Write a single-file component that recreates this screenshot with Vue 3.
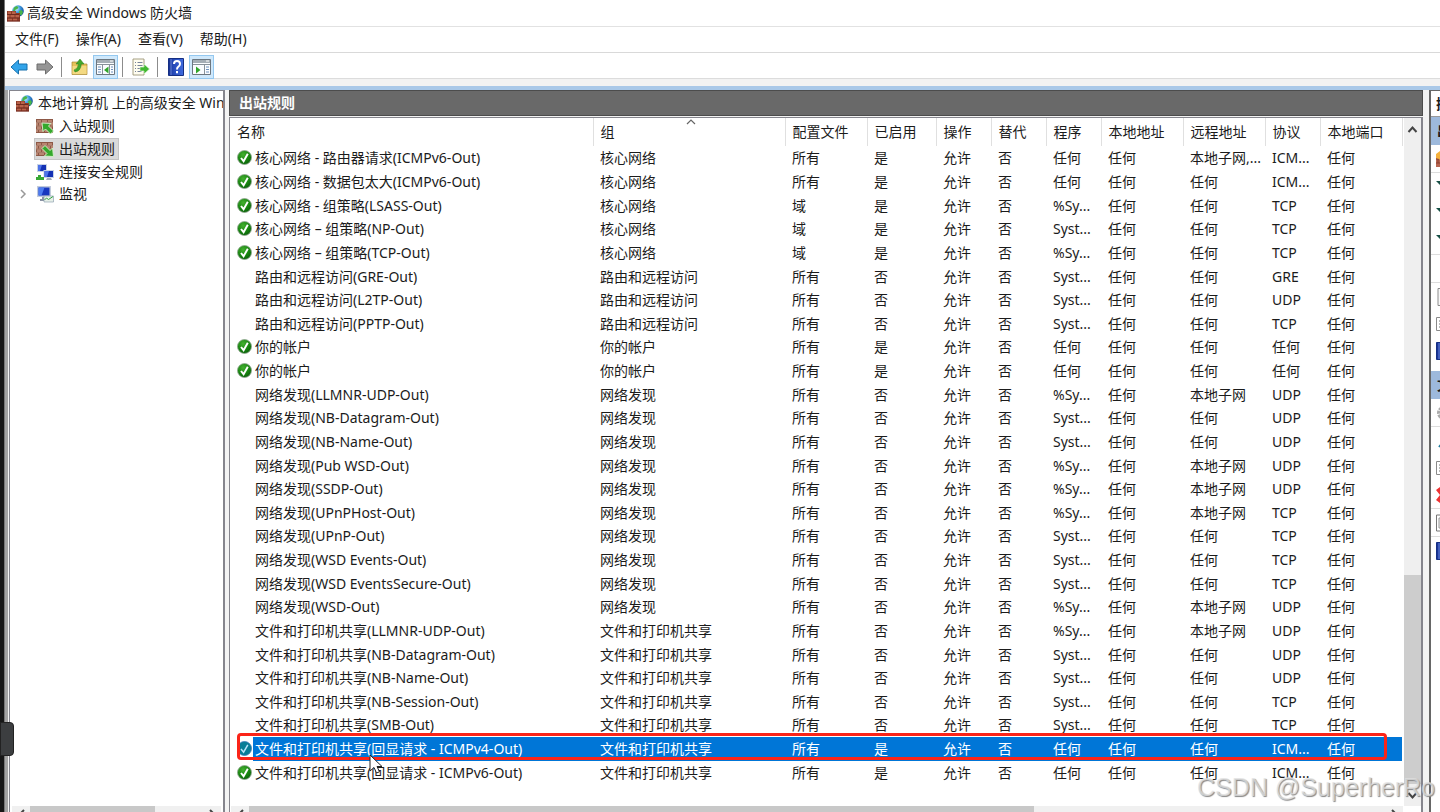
<script setup>
const menus = ['文件(F)', '操作(A)', '查看(V)', '帮助(H)']

const columns = [
  ['名称', 'c-name'], ['组', 'c-group'], ['配置文件', 'c-wide'], ['已启用', 'c-mid'],
  ['操作', 'c-small'], ['替代', 'c-small'], ['程序', 'c-small'], ['本地地址', 'c-wide'],
  ['远程地址', 'c-wide'], ['协议', 'c-small'], ['本地端口', 'c-wide'],
]

const CORE = '核心网络'
const RAS = '路由和远程访问'
const ACC = '你的帐户'
const NET = '网络发现'
const FPS = '文件和打印机共享'
const ANY = '任何'
const SUB = '本地子网'
const raw = [
  [1, CORE + ' - 路由器请求(ICMPv6-Out)', CORE, '所有', ANY, '本地子网,...', 'ICM...'],
  [1, CORE + ' - 数据包太大(ICMPv6-Out)', CORE, '所有', ANY, ANY, 'ICM...'],
  [1, CORE + ' - 组策略(LSASS-Out)', CORE, '域', '%Sy...', ANY, 'TCP'],
  [1, CORE + ' – 组策略(NP-Out)', CORE, '域', 'Syst...', ANY, 'TCP'],
  [1, CORE + ' – 组策略(TCP-Out)', CORE, '域', '%Sy...', ANY, 'TCP'],
  [0, RAS + '(GRE-Out)', RAS, '所有', 'Syst...', ANY, 'GRE'],
  [0, RAS + '(L2TP-Out)', RAS, '所有', 'Syst...', ANY, 'UDP'],
  [0, RAS + '(PPTP-Out)', RAS, '所有', 'Syst...', ANY, 'TCP'],
  [1, ACC, ACC, '所有', ANY, ANY, ANY],
  [1, ACC, ACC, '所有', ANY, ANY, ANY],
  [0, NET + '(LLMNR-UDP-Out)', NET, '所有', '%Sy...', SUB, 'UDP'],
  [0, NET + '(NB-Datagram-Out)', NET, '所有', 'Syst...', ANY, 'UDP'],
  [0, NET + '(NB-Name-Out)', NET, '所有', 'Syst...', ANY, 'UDP'],
  [0, NET + '(Pub WSD-Out)', NET, '所有', '%Sy...', SUB, 'UDP'],
  [0, NET + '(SSDP-Out)', NET, '所有', '%Sy...', SUB, 'UDP'],
  [0, NET + '(UPnPHost-Out)', NET, '所有', '%Sy...', SUB, 'TCP'],
  [0, NET + '(UPnP-Out)', NET, '所有', 'Syst...', ANY, 'TCP'],
  [0, NET + '(WSD Events-Out)', NET, '所有', 'Syst...', ANY, 'TCP'],
  [0, NET + '(WSD EventsSecure-Out)', NET, '所有', 'Syst...', ANY, 'TCP'],
  [0, NET + '(WSD-Out)', NET, '所有', '%Sy...', SUB, 'UDP'],
  [0, FPS + '(LLMNR-UDP-Out)', FPS, '所有', '%Sy...', SUB, 'UDP'],
  [0, FPS + '(NB-Datagram-Out)', FPS, '所有', 'Syst...', ANY, 'UDP'],
  [0, FPS + '(NB-Name-Out)', FPS, '所有', 'Syst...', ANY, 'UDP'],
  [0, FPS + '(NB-Session-Out)', FPS, '所有', 'Syst...', ANY, 'TCP'],
  [0, FPS + '(SMB-Out)', FPS, '所有', 'Syst...', ANY, 'TCP'],
  [1, FPS + '(回显请求 - ICMPv4-Out)', FPS, '所有', ANY, ANY, 'ICM...'],
  [1, FPS + '(回显请求 - ICMPv6-Out)', FPS, '所有', ANY, ANY, 'ICM...'],
]
const SELECTED = 25
const rules = raw.map(([on, name, group, profile, program, remote, protocol]) => ({
  on: !!on,
  name,
  cells: [group, profile, on ? '是' : '否', '允许', '否', program, ANY, remote, protocol, ANY],
}))

const topActions = ['new', '-', 'filter', 'filter', 'filter', '-', 'none', '-', 'page', 'list', 'help']
const ruleActions = ['gear', '-', 'cut', 'list', 'delete', '-', 'props', '-', 'help']
</script>

<template>
  <div class="window">
    <svg class="defs" aria-hidden="true">
      <defs>
        <radialGradient id="globe" cx="35%" cy="30%" r="75%">
          <stop offset="0" stop-color="#d9f2ff" /><stop offset=".45" stop-color="#3f9be0" /><stop offset="1" stop-color="#0c4190" />
        </radialGradient>
        <radialGradient id="ok" cx="40%" cy="30%" r="75%">
          <stop offset="0" stop-color="#43b02f" /><stop offset=".6" stop-color="#16830f" /><stop offset="1" stop-color="#0a5d0a" />
        </radialGradient>
        <linearGradient id="book" x1="0" y1="0" x2="1" y2="0">
          <stop offset="0" stop-color="#17318f" /><stop offset=".3" stop-color="#2447b5" /><stop offset="1" stop-color="#3f6be0" />
        </linearGradient>
        <symbol id="firewall" viewBox="0 0 17 17">
          <circle cx="11" cy="6" r="5.8" fill="url(#globe)" />
          <path d="M7 2.5 9.500 1l2 1-1 2-2 .7L7.500 7 6 6ZM12 6l2.500-1 1.500 2-1.500 3.500L12 9Z" fill="#48b549" />
          <path d="M0 6h9v2h4v8.500H0Z" fill="#8e3a28" />
          <path d="M1 6.500h3v2.500H1Zm4 0h3.500v2.500H5ZM0 10h2.500v2.500H0Zm3.500 0h4v2.500h-4Zm5 0h3.500v2.500H8.500ZM1 13.500h4v2H1Zm5 0h4v2H6Z" fill="#b9634a" />
          <path d="M0 9.500h12M0 13h13M0 16h13" stroke="#5b2018" stroke-width=".6" />
        </symbol>
        <symbol id="bricks" viewBox="0 0 18 15">
          <path d="M0 0h17v14H0Z" fill="#8d5846" />
          <path d="M1 1h4v2H1Zm5 0h5v2H6Zm6 0h4v2h-4ZM0 4h2v2.500H0Zm3 0h5v2.500H3Zm6 0h5v2.500H9Zm6 0h2v2.500h-2ZM1 7.500h4V10H1Zm5 0h5V10H6Zm6 0h4V10h-4ZM0 11h2v2H0Zm3 0h5v2H3Zm6 0h5v2H9Z" fill="#b98571" />
          <path d="M0 3.500h17M0 7h17M0 10.500h17" stroke="#d2b0a0" stroke-width=".4" />
        </symbol>
        <symbol id="inbound" viewBox="0 0 18 15">
          <use href="#bricks" width="18" height="15" />
          <path d="m6 4 9 .5-2.500 2.500 5 5-3 3-5-5L7 12.500Z" fill="#35a82c" stroke="#d8f3cd" stroke-width=".9" />
        </symbol>
        <symbol id="outbound" viewBox="0 0 18 15">
          <use href="#bricks" width="18" height="15" />
          <path d="m17.500 14.500-9-.5 2.500-2.500-5-5 3-3 5 5L16.500 6Z" fill="#35a82c" stroke="#d8f3cd" stroke-width=".9" />
        </symbol>
        <symbol id="computers" viewBox="0 0 18 17">
          <path d="M1 0h10v8H1Z" fill="#c9d3e4" /><path d="M2 1h8v6H2Z" fill="#1431b4" /><path d="M2 1h4L4 7H2Z" fill="#4d73e8" />
          <path d="M7.500 6H18v8H7.500Z" fill="#c9d3e4" /><path d="M8.500 7h8.500v6H8.500Z" fill="#1431b4" /><path d="M8.500 7H13l-2 6H8.500Z" fill="#4d73e8" />
          <path d="M11 14h4l1 2h-6Z" fill="#a3abb8" />
          <path d="M0 13h2v-2h3v2h3v3H0Z" fill="#37a834" />
        </symbol>
        <symbol id="monitor" viewBox="0 0 18 17">
          <path d="M1 0h14v11H1Z" fill="#c2cbdc" /><path d="M2.500 1.500h11v8h-11Z" fill="#1838bf" /><path d="M2.500 1.500h6l-3 8h-3Z" fill="#4d7cf0" />
          <path d="M6 11h4v2h2v2H4v-2h2Z" fill="#8b94a5" />
          <path d="M8 10h9.500v6H8Z" fill="#e6efe8" stroke="#91a4b1" stroke-width=".7" />
          <path d="m8.500 14 2-2 2 1.500 4.500-3" fill="none" stroke="#36a546" />
        </symbol>
        <symbol id="check" viewBox="0 0 15 15">
          <circle cx="7.500" cy="7.500" r="7" fill="url(#ok)" stroke="#93a793" stroke-width=".8" />
          <path d="m4 8 2.600 3.200L10.800 3.800" fill="none" stroke="#fff" stroke-width="1.900" />
        </symbol>
        <symbol id="check-sel" viewBox="0 0 15 15">
          <circle cx="7.500" cy="7.500" r="7" fill="#087e96" stroke="#3978b8" stroke-width=".8" />
          <path d="m4 8 2.600 3.200L10.800 3.800" fill="none" stroke="#b9e4fa" stroke-width="1.500" />
        </symbol>
        <symbol id="arrow" viewBox="0 0 18 16">
          <path d="M1 8 8.500 1v4H17v6H8.500v4Z" stroke-linejoin="round" />
        </symbol>
        <symbol id="folder-up" viewBox="0 0 17 17">
          <path d="M1 4h6l1.500 2H16v10.500H1Z" fill="#e6c25a" stroke="#a98630" stroke-width=".7" />
          <path d="M1.500 8H15.500v8H1.500Z" fill="#f3d982" />
          <path d="M3 12q4-1 4.500-6H5L9 1l4 5h-2.700Q10 13 4 14Z" fill="#43a82d" stroke="#2c7d1d" stroke-width=".5" />
        </symbol>
        <symbol id="tree-pane" viewBox="0 0 19 17">
          <path d="M.5 1.500h18v15H.5Z" fill="#fafcff" stroke="#6d7780" /><path d="M1 2h17v3H1Z" fill="#a4adb5" />
          <path d="M14 3h3" stroke="#fff" /><path d="M1 6.500h17M6.500 7v9M13.500 7v9" stroke="#87919a" /><path d="M2 9h3m-3 2.500h3m-3 2.500h3M15 9h2m-2 2.500h2m-2 2.500h2" stroke="#6f92bd" />
          <path d="m12.500 8.500-4.500 3.500 4.500 3.500Z" fill="#2fa52a" />
        </symbol>
        <symbol id="action-pane" viewBox="0 0 19 17">
          <path d="M.5 1.500h18v15H.5Z" fill="#fafcff" stroke="#6d7780" /><path d="M1 2h17v3H1Z" fill="#a4adb5" />
          <path d="M14 3h3" stroke="#fff" /><path d="M1 6.500h17M12.500 7v9" stroke="#87919a" /><path d="M14 9h3m-3 2.500h3m-3 2.500h3" stroke="#6f92bd" />
          <path d="m4 8.500 4.500 3.500-4.500 3.500Z" fill="#2fa52a" />
        </symbol>
        <symbol id="export" viewBox="0 0 18 18">
          <path d="M1 1h11v16H1Z" fill="#fffdf0" stroke="#9c9577" stroke-width=".9" />
          <path d="M3 4.500h1m1.500 0h5M3 7.500h1m1.500 0h5M3 10.500h1m1.500 0h3M3 13.500h1m1.500 0h4" stroke="#77829a" />
          <path d="M8 9h4V6l5.500 5-5.500 5v-3H8Z" fill="#42b831" stroke="#e6f8df" stroke-width=".6" />
        </symbol>
        <symbol id="help" viewBox="0 0 16 18">
          <path d="M.5.5h15v17H.5Z" fill="url(#book)" stroke="#152f83" /><path d="M3 1v16" stroke="#89a4ef" stroke-width=".7" />
          <path d="M6 6q0-3 3-3t3 3q0 1.500-1.500 2.500T9 11.500M9 13v2.200" fill="none" stroke="#fff" stroke-width="2" />
        </symbol>
      </defs>
    </svg>

    <aside class="edge"></aside>
    <div class="frame">
      <header class="title">
        <svg width="17" height="17"><use href="#firewall" /></svg>
        <h1>高级安全 Windows 防火墙</h1>
      </header>
      <nav class="menu">
        <button v-for="m in menus" :key="m" type="button">{{ m }}</button>
      </nav>
      <div class="toolbar">
        <button type="button" aria-label="后退"><svg width="18" height="16" class="back"><use href="#arrow" /></svg></button>
        <button type="button" aria-label="前进"><svg width="18" height="16" class="forward"><use href="#arrow" /></svg></button>
        <i></i>
        <button type="button" aria-label="上移"><svg width="17" height="17"><use href="#folder-up" /></svg></button>
        <button type="button" class="on" aria-label="控制台树"><svg width="19" height="17"><use href="#tree-pane" /></svg></button>
        <i></i>
        <button type="button" aria-label="导出列表"><svg width="18" height="18"><use href="#export" /></svg></button>
        <i></i>
        <button type="button" aria-label="帮助"><svg width="16" height="18"><use href="#help" /></svg></button>
        <button type="button" class="on" aria-label="操作窗格"><svg width="19" height="17"><use href="#action-pane" /></svg></button>
      </div>

      <main class="panes">
        <section class="pane tree">
          <ul>
            <li class="root"><button type="button"><svg width="17" height="17"><use href="#firewall" /></svg>本地计算机 上的高级安全 Windows</button></li>
            <li><button type="button"><svg width="18" height="15"><use href="#inbound" /></svg>入站规则</button></li>
            <li><button type="button" class="current"><svg width="18" height="15"><use href="#outbound" /></svg>出站规则</button></li>
            <li class="low"><button type="button"><svg width="18" height="17"><use href="#computers" /></svg>连接安全规则</button></li>
            <li class="low">
              <svg class="expander" width="8" height="10" viewBox="0 0 8 10"><path d="m2 1 4 4-4 4" fill="none" stroke="#999" stroke-width="1.500" /></svg>
              <button type="button"><svg width="18" height="17"><use href="#monitor" /></svg>监视</button>
            </li>
          </ul>
          <div class="hbar">
            <svg width="18" height="6" viewBox="0 0 18 6"><path d="m12 4-5 5" stroke="#444" stroke-width="2" /></svg>
            <span class="thumb"></span>
            <svg width="18" height="6" viewBox="0 0 18 6"><path d="m7 4 5 5" stroke="#444" stroke-width="2" /></svg>
          </div>
        </section>

        <section class="center">
          <h2>出站规则</h2>
          <div class="pane list">
            <div class="body">
              <div class="scroll">
                <table>
                  <colgroup><col v-for="c in columns" :key="c[0]" :class="c[1]" /></colgroup>
                  <thead>
                    <tr>
                      <th v-for="(c, i) in columns" :key="c[0]" scope="col">
                        {{ c[0] }}
                        <svg v-if="i === 1" class="sort" width="10" height="6" viewBox="0 0 10 6"><path d="m1 5 4-4 4 4" fill="none" stroke="#666" stroke-width="1.200" /></svg>
                      </th>
                    </tr>
                  </thead>
                  <tbody>
                    <tr v-for="(r, i) in rules" :key="i" :class="{ selected: i === SELECTED }">
                      <td>
                        <span class="state"><svg v-if="r.on" width="15" height="15"><use :href="i === SELECTED ? '#check-sel' : '#check'" /></svg></span>{{ r.name }}
                        <span v-if="i === SELECTED" class="marker"></span>
                        <svg v-if="i === SELECTED" class="cursor" width="14" height="21" viewBox="0 0 14 21"><path d="M1 1v16l4-3.500L7.500 19l3-1.200L8 12.500h5Z" fill="#fff" stroke="#222" /></svg>
                      </td>
                      <td v-for="(c, j) in r.cells" :key="j">{{ c }}</td>
                    </tr>
                  </tbody>
                </table>
              </div>
              <div class="vbar">
                <svg width="17" height="24" viewBox="0 0 17 24"><path d="m4.500 14 4-4.500 4 4.500" fill="none" stroke="#444" stroke-width="2" /></svg>
                <span class="track"></span>
                <span class="thumb"></span>
                <svg width="17" height="22" viewBox="0 0 17 22"><path d="m4.500 9 4 4.500 4-4.500" fill="none" stroke="#444" stroke-width="2" /></svg>
              </div>
            </div>
            <div class="hbar">
              <svg width="18" height="6" viewBox="0 0 18 6"><path d="m12 4-5 5" stroke="#444" stroke-width="2" /></svg>
              <span class="thumb"></span>
              <svg width="18" height="6" viewBox="0 0 18 6"><path d="m7 4 5 5" stroke="#444" stroke-width="2" /></svg>
            </div>
          </div>
        </section>

        <section class="actions">
          <h2>操作</h2>
          <template v-for="(group, g) in [topActions, ruleActions]" :key="g">
            <h3>{{ g ? '文件' : '出站规则' }}</h3>
            <ul :class="{ spaced: !g }">
              <li v-for="(a, k) in group" :key="k" :class="{ rule: a === '-' }">
                <svg v-if="a !== '-'" width="16" height="18" viewBox="0 0 16 18">
                  <template v-if="a === 'new'">
                    <path d="M0 5h16v12H0Z" fill="#b76550" /><path d="M0 9h16M0 13h16M5 5v4M2 9v4M8 9v4M5 13v4" stroke="#8a4030" /><path d="m4 1 2 3 3-1-1 3 2 2-3 1-2 2-2-2-3-1V4Z" fill="#f5b13c" />
                  </template>
                  <path v-else-if="a === 'filter'" d="M0 3h14l-5 5v6l-4-2V8Z" fill="#174f45" />
                  <path v-else-if="a === 'page'" d="M2 .5h12v17H2Z" fill="#f8f8f8" stroke="#8c8c8c" />
                  <template v-else-if="a === 'list'">
                    <path d="M.5 2.500h14v13H.5Z" fill="#fff" stroke="#8a8a8a" /><path d="M3 6h9M3 9h9M3 12h9" stroke="#777" />
                  </template>
                  <use v-else-if="a === 'help'" href="#help" />
                  <circle v-else-if="a === 'gear'" cx="8" cy="9" r="5.500" fill="#f2f2f2" stroke="#aaa" stroke-width="3" stroke-dasharray="3 1" />
                  <path v-else-if="a === 'cut'" d="m3 15 4-5 6-9" fill="none" stroke="#207b9d" stroke-width="2" />
                  <path v-else-if="a === 'delete'" d="M0 4 4 1l4 4 4-4 3 3-4 5 4 5-3 3-4-4-4 4-4-3 4-5Z" fill="#e33" />
                  <template v-else-if="a === 'props'">
                    <path d="M.5 1h14v16H.5Z" fill="#fff" stroke="#777" /><path d="M3 4h9v10H3Z" fill="#eee" stroke="#999" />
                  </template>
                </svg>
              </li>
            </ul>
          </template>
        </section>
      </main>
    </div>

    <button class="handle" type="button" aria-label="展开"></button>
    <p class="watermark">CSDN @SuperherRo</p>
  </div>
</template>

<style>
body { margin: 0; }
</style>

<style scoped>
* { box-sizing: border-box; }
.window {
  position: relative; display: flex; height: 100vh; overflow: hidden; background: #fff; color: #1b1b1b;
  font: 14px/22px "Noto Sans", "Noto Sans CJK SC", sans-serif;
}
.defs { position: absolute; width: 0; height: 0; }
svg { display: block; flex: none; }
button { font: inherit; color: inherit; background: none; border: 0; padding: 0; margin: 0; white-space: nowrap; }
h1, h2, h3, ul, p { margin: 0; padding: 0; font-size: 14px; font-weight: 400; list-style: none; }
.edge { flex: none; width: 5px; background: #161616; border-right: 1px solid #777; }
.frame { flex: 1; min-width: 0; display: flex; flex-direction: column; }
.title { flex: none; display: flex; align-items: center; gap: 3px; height: 27px; padding-left: 2px; border-bottom: 1px solid #e2e2e2; }
.menu { flex: none; display: flex; gap: 17px; height: 26px; padding-left: 10px; border-bottom: 1px solid #d9d9d9; }
.menu button { height: 24px; }
.toolbar { flex: none; display: flex; gap: 1px; align-items: center; height: 33px; padding: 0 1px 6px; background: linear-gradient(#fff 25px, #dcdcdc 25px, #dcdcdc 26px, #f2f2f2 26px); }
.toolbar button { display: grid; place-items: center; width: 25px; height: 24px; }
.toolbar .on { background: #cfe8fb; border: 1px solid #94c8f0; }
.toolbar i { width: 1px; height: 20px; margin: 0 4px 0 3px; background: #8c8c8c; }
.back { fill: #32a4ea; stroke: #1670ac; }
.forward { fill: #969696; stroke: #6d6d6d; transform: scaleX(-1); }

.panes { flex: 1; min-height: 0; display: flex; gap: 4px; padding-left: 4px; border-top: 4px solid #a9c8e8; background: linear-gradient(to right, #a3a3a3 3px, #f3f3f3 3px); }
.pane { background: #fff; border: 2px solid #85858d; border-bottom: 0; }
.tree { flex: none; width: 216px; display: flex; flex-direction: column; justify-content: space-between; overflow: hidden; border-width: 1px 2px 0 1px; }
.tree ul { padding-top: 1px; }
.tree li { position: relative; display: flex; height: 23px; padding-left: 24px; }
.tree .root { padding-left: 4px; }
.tree .low { height: 22px; }
.tree li button { display: flex; align-items: center; gap: 5px; height: 22px; padding: 0 3px 0 1px; border: 1px solid transparent; }
.tree li .current { background: #dadada; border-color: #c4c4c4; }
.expander { position: absolute; left: 9px; top: 6px; }
.hbar { flex: none; display: flex; height: 6px; background: #f0f0f0; }
.hbar .thumb { background: #c8c8c8; }
.tree .hbar { margin: 0 2px; justify-content: space-between; }
.tree .hbar .thumb { width: 60%; margin-right: auto; }

.center { flex: 1; min-width: 0; display: flex; flex-direction: column; gap: 1px; }
.center h2 { flex: none; height: 26px; padding-left: 9px; border: 1px solid #4c4c4c; background: #696969; color: #fff; font-weight: 700; line-height: 23px; }
.list { flex: 1; min-height: 0; display: flex; flex-direction: column; border-width: 1px 2px 0 1px; }
.body { flex: 1; min-height: 0; display: flex; }
.scroll { flex: 1; min-width: 0; overflow: hidden; }
table { width: 1172px; table-layout: fixed; border-collapse: collapse; }
.c-name { width: 363px; }
.c-group { width: 192px; }
.c-wide { width: 82px; }
.c-mid { width: 69px; }
.c-small { width: 55px; }
th, td { padding: 0 0 0 7px; text-align: left; font-weight: 400; white-space: nowrap; overflow: hidden; }
th { position: relative; height: 28px; border-right: 1px solid #e0e0e0; }
.sort { position: absolute; left: 92px; top: 1px; }
tbody tr { position: relative; height: 24px; }
tbody tr:nth-child(8n + 3), tbody tr:nth-child(8n + 6), tbody tr:nth-child(8n + 8) { height: 23px; }
.state { display: inline-block; width: 18px; height: 15px; vertical-align: -2px; }
.selected { color: #fff; background: linear-gradient(to right, transparent 23px, #0076d7 23px); }
.marker { position: absolute; left: 7px; right: 15px; top: -4px; bottom: 1px; border: 3px solid #fb2418; border-radius: 4px; }
.cursor { position: absolute; left: 139px; top: 17px; z-index: 1; }
.vbar { flex: none; display: flex; flex-direction: column; width: 17px; background: #efefef; }
.vbar .track { flex: 432; }
.vbar .thumb { flex: 209; background: #cdcdcd; }
.list .hbar { margin: 0 18px 0 1px; justify-content: space-between; }
.list .hbar .thumb { width: 67%; margin-right: auto; }

.actions { flex: none; width: 11px; margin-left: 2px; overflow: hidden; border-left: 2px solid #666; background: #fff; white-space: nowrap; }
.actions h2 { height: 27px; padding-left: 5px; border-top: 1px solid #666; border-bottom: 1px solid #999; font-weight: 700; line-height: 26px; }
.actions h3 { height: 28px; padding-left: 6px; background: #9db9dc; font-weight: 700; line-height: 28px; }
.actions li { display: flex; align-items: center; height: 27px; padding-left: 5px; }
.actions .rule { height: 1px; background: #ddd; }
.actions .spaced { padding-bottom: 7px; }

.handle { position: absolute; left: 0; top: 722px; width: 14px; height: 34px; border-radius: 0 4px 4px 0; background: #3c3e40; border: 1px solid #222; }
.watermark { position: absolute; right: 5px; bottom: 9px; font: 25px/32px "Liberation Sans", Arial, sans-serif; color: rgba(225, 225, 225, .75); text-shadow: 1px 1px 1px #888; }
</style>
